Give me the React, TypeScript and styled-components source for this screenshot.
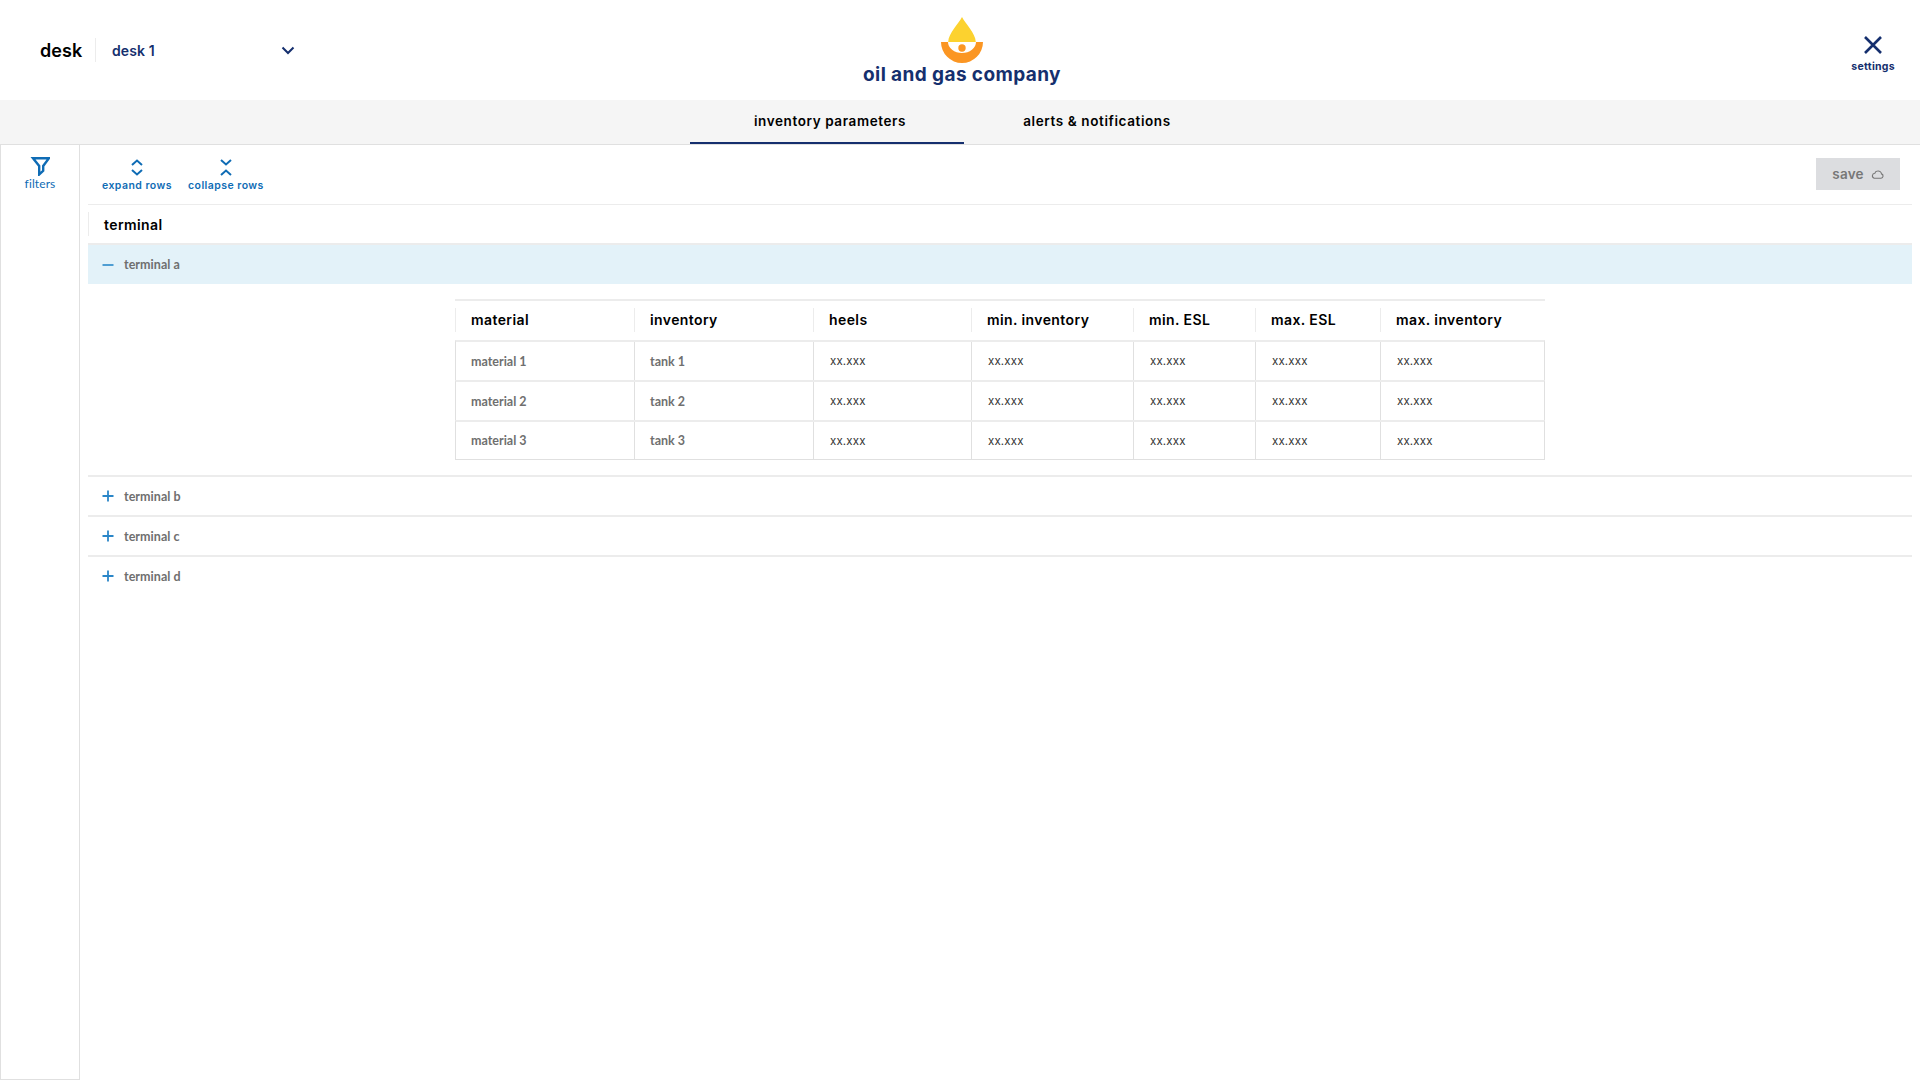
import React, { FC } from "react";
import styled, { createGlobalStyle } from "styled-components";

const NAVY = "#152f6e";
const BLUE = "#0f6cb5";
const LINE = "#e0e0e0";
const LIGHT_LINE = "#ececec";

const columns = [
  { name: "material", width: 179 },
  { name: "inventory", width: 179 },
  { name: "heels", width: 158 },
  { name: "min. inventory", width: 162 },
  { name: "min. ESL", width: 122 },
  { name: "max. ESL", width: 125 },
  { name: "max. inventory", width: 163 },
];

const rows = [
  ["material 1", "tank 1"],
  ["material 2", "tank 2"],
  ["material 3", "tank 3"],
];

const closedTerminals = ["terminal b", "terminal c", "terminal d"];

export default function App() {
  return (
    <>
      <GlobalStyle />
      <Page>
        <Header>
          <DeskPicker>
            <DeskLabel>desk</DeskLabel>
            <DeskSelect>
              <DeskValue>desk 1</DeskValue>
              <svg width="14" height="9" viewBox="0 0 14 9" fill="none">
                <path d="M1.5 1.5 7 7l5.5-5.5" stroke={NAVY} strokeWidth="2" />
              </svg>
            </DeskSelect>
          </DeskPicker>
          <Brand>
            <svg width="42" height="47" viewBox="0 0 42 47">
              <path d="M21 0C24 6 34.500 16 34.800 25H7.200C7.500 16 18 6 21 0z" fill="#fcd22f" />
              <path d="M0 25h7a14 11 0 0 0 28 0h7a21 21 0 0 1-42 0z" fill="#fb9623" />
              <circle cx="21" cy="31" r="3.700" fill="#fb9623" />
            </svg>
            <BrandName>oil and gas company</BrandName>
          </Brand>
          <SettingsButton>
            <svg width="20" height="20" viewBox="0 0 20 20" fill="none">
              <path d="M2 2l16 16M18 2 2 18" stroke={NAVY} strokeWidth="2.600" />
            </svg>
            <SettingsLabel>settings</SettingsLabel>
          </SettingsButton>
        </Header>

        <Tabs>
          <Tab $active $width={274}>inventory parameters</Tab>
          <Tab $width={266}>alerts &amp; notifications</Tab>
        </Tabs>

        <Body>
          <Sidebar>
            <svg width="20" height="19" viewBox="-2 0 20 19" fill="none">
              <path d="M1 1.200h16l-5.800 7.800v4.800l-4 3.700V9z" stroke={BLUE} strokeWidth="2.400" />
            </svg>
            <FilterLabel>filters</FilterLabel>
          </Sidebar>

          <Main>
            <Toolbar>
              <ToolGroup>
                <ToolButton>
                  <svg width="12" height="17" viewBox="0 0 12 17" fill="none">
                    <path d="M1 6l5-4.500L11 6M1 11l5 4.500L11 11" stroke={BLUE} strokeWidth="2" />
                  </svg>
                  <ToolLabel>expand rows</ToolLabel>
                </ToolButton>
                <ToolButton>
                  <svg width="12" height="17" viewBox="0 0 12 17" fill="none">
                    <path d="M1 1l5 4.500L11 1M1 16l5-4.500L11 16" stroke={BLUE} strokeWidth="2" />
                  </svg>
                  <ToolLabel>collapse rows</ToolLabel>
                </ToolButton>
              </ToolGroup>
              <SaveButton>
                save
                <svg width="13" height="9" viewBox="0 0 13 9" fill="none">
                  <path
                    d="M3.200 8.200h6.800a2.200 2.200 0 0 0 .5-4.300A3.300 3.300 0 0 0 6.600 1 3 3 0 0 0 3.800 3.300a2.500 2.500 0 0 0-.6 4.900z"
                    stroke="#777"
                    strokeWidth="1.100"
                  />
                </svg>
              </SaveButton>
            </Toolbar>

            <ListHead>
              <HeadLabel>terminal</HeadLabel>
            </ListHead>

            <TerminalRow $open>
              <ToggleIcon open />
              <TerminalName>terminal a</TerminalName>
            </TerminalRow>

            <DetailPanel>
              <Table>
                <TableHead>
                  {columns.map((col) => (
                    <HeadCell key={col.name} $width={col.width}>
                      <HeadLabel>{col.name}</HeadLabel>
                    </HeadCell>
                  ))}
                </TableHead>
                {rows.map(([material, tank]) => (
                  <TableRow key={material}>
                    <NameCell $width={columns[0].width}>{material}</NameCell>
                    <NameCell $width={columns[1].width}>{tank}</NameCell>
                    {columns.slice(2).map((col) => (
                      <ValueCell key={col.name} $width={col.width}>xx.xxx</ValueCell>
                    ))}
                  </TableRow>
                ))}
              </Table>
            </DetailPanel>

            {closedTerminals.map((name) => (
              <TerminalRow key={name}>
                <ToggleIcon />
                <TerminalName>{name}</TerminalName>
              </TerminalRow>
            ))}
          </Main>
        </Body>
      </Page>
    </>
  );
}

const ToggleIcon: FC<{ open?: boolean }> = ({ open }) => (
  <svg width="12" height="12" viewBox="0 0 12 12" fill="none">
    <path d={open ? "M.5 6h11" : "M.5 6h11M6 .5v11"} stroke={open ? "#3f95cf" : "#2a86c8"} strokeWidth="1.800" />
  </svg>
);

const GlobalStyle = createGlobalStyle`
  html, body {
    margin: 0;
    height: 100%;
    background: #fff;
    font-family: Lato, "Liberation Sans", sans-serif;
  }
  #root {
    height: 100%;
  }
`;

const Page = styled.div`
  display: flex;
  flex-direction: column;
  height: 1080px;
`;

const Header = styled.header`
  display: grid;
  grid-template-columns: 823px 198px 1fr;
  align-items: start;
  height: 100px;
  padding: 0 25px 0 40px;
`;

const DeskPicker = styled.div`
  display: flex;
  align-items: center;
  margin-top: 38px;
  height: 24px;
`;

const DeskLabel = styled.span`
  width: 55px;
  height: 24px;
  line-height: 25px;
  border-right: 1px solid ${LIGHT_LINE};
  font-family: Inter, sans-serif;
  font-size: 18px;
  font-weight: 600;
  letter-spacing: 0.1px;
  color: #000;
`;

const DeskSelect = styled.div`
  display: flex;
  align-items: center;
  justify-content: space-between;
  width: 183px;
  margin-left: 16px;
`;

const DeskValue = styled.span`
  font-family: Inter, sans-serif;
  font-size: 14px;
  font-weight: 600;
  letter-spacing: 0.1px;
  color: ${NAVY};
`;

const Brand = styled.div`
  display: flex;
  flex-direction: column;
  align-items: center;
  padding-top: 17px;
`;

const BrandName = styled.div`
  font-family: Inter, sans-serif;
  font-size: 19px;
  font-weight: 700;
  line-height: 22px;
  letter-spacing: 0.4px;
  white-space: nowrap;
  color: ${NAVY};
`;

const SettingsButton = styled.div`
  display: flex;
  flex-direction: column;
  align-items: center;
  justify-self: end;
  padding-top: 35px;
  gap: 5px;
`;

const SettingsLabel = styled.span`
  font-family: Inter, sans-serif;
  font-size: 10.500px;
  font-weight: 700;
  letter-spacing: 0.3px;
  color: ${NAVY};
`;

const Tabs = styled.nav`
  display: flex;
  justify-content: center;
  height: 44px;
  background: #f5f5f5;
  border-bottom: 1px solid ${LINE};
`;

const Tab = styled.div<{ $active?: boolean; $width: number }>`
  display: flex;
  align-items: center;
  justify-content: center;
  width: ${(p) => p.$width}px;
  height: 44px;
  box-sizing: border-box;
  padding-left: ${(p) => (p.$active ? 6 : 0)}px;
  border-bottom: 2px solid ${(p) => (p.$active ? NAVY : "transparent")};
  font-family: Inter, sans-serif;
  font-size: 13.500px;
  font-weight: 600;
  letter-spacing: 0.6px;
  color: #000;
`;

const Body = styled.div`
  display: flex;
  flex: 1;
  min-height: 0;
`;

const Sidebar = styled.aside`
  display: flex;
  flex-direction: column;
  align-items: center;
  width: 80px;
  box-sizing: border-box;
  padding-top: 12px;
  border: 1px solid ${LINE};
  border-top: 0;
`;

const FilterLabel = styled.span`
  font-size: 12px;
  letter-spacing: 0.1px;
  color: ${BLUE};
`;

const Main = styled.main`
  flex: 1;
  padding: 0 8px;
`;

const Toolbar = styled.div`
  display: flex;
  align-items: flex-start;
  justify-content: space-between;
  height: 59px;
  border-bottom: 1px solid ${LIGHT_LINE};
`;

const ToolGroup = styled.div`
  display: flex;
  gap: 16px;
  padding: 14px 0 0 14px;
`;

const ToolButton = styled.div`
  display: flex;
  flex-direction: column;
  align-items: center;
  gap: 3px;
`;

const ToolLabel = styled.span`
  font-family: Inter, sans-serif;
  font-size: 10.500px;
  font-weight: 600;
  letter-spacing: 0.45px;
  color: ${BLUE};
`;

const SaveButton = styled.button`
  display: flex;
  align-items: center;
  justify-content: center;
  gap: 7px;
  width: 84px;
  height: 32px;
  margin: 13px 12px 0 0;
  border: 0;
  background: #dcdde0;
  font-family: Inter, sans-serif;
  font-size: 13.500px;
  font-weight: 600;
  letter-spacing: 0.2px;
  color: #777;
`;

const ListHead = styled.div`
  display: flex;
  align-items: center;
  height: 38px;
  border-bottom: 2px solid ${LIGHT_LINE};
`;

const HeadLabel = styled.span`
  display: flex;
  align-items: center;
  height: 24px;
  padding-left: 15px;
  border-left: 1px solid ${LIGHT_LINE};
  font-family: Inter, sans-serif;
  font-size: 14px;
  font-weight: 600;
  letter-spacing: 0.4px;
  white-space: nowrap;
  color: #000;
`;

const TerminalRow = styled.div<{ $open?: boolean }>`
  display: flex;
  align-items: center;
  gap: 10px;
  height: ${(p) => (p.$open ? 39 : 38)}px;
  padding-left: 14px;
  background: ${(p) => (p.$open ? "#e3f2f9" : "#fff")};
  border-bottom: ${(p) => (p.$open ? "0" : `2px solid ${LIGHT_LINE}`)};

  &:last-child {
    border-bottom: 0;
  }
`;

const TerminalName = styled.span`
  font-size: 12.500px;
  font-weight: 700;
  letter-spacing: 0.05px;
  color: #6f6f6f;
`;

const DetailPanel = styled.div`
  height: 193px;
  box-sizing: border-box;
  padding: 15px 0 0 367px;
  border-bottom: 2px solid ${LIGHT_LINE};
`;

const Table = styled.div`
  width: 1090px;
  border-top: 2px solid ${LIGHT_LINE};
`;

const TableHead = styled.div`
  display: flex;
  align-items: center;
  height: 37px;
  padding-bottom: 2px;
`;

const HeadCell = styled.div<{ $width: number }>`
  width: ${(p) => p.$width}px;
`;

const TableRow = styled.div`
  display: flex;
  height: 40px;
  box-sizing: border-box;
  border-top: 2px solid ${LIGHT_LINE};
  border-left: 1px solid ${LINE};
  border-right: 1px solid ${LINE};

  &:last-child {
    border-bottom: 1px solid ${LINE};
  }
`;

const NameCell = styled.div<{ $width: number }>`
  display: flex;
  align-items: center;
  width: ${(p) => p.$width}px;
  box-sizing: border-box;
  padding-left: 15px;
  border-right: 1px solid ${LINE};
  font-size: 12.500px;
  font-weight: 700;
  color: #6f6f6f;
`;

const ValueCell = styled(NameCell)`
  padding-left: 16px;
  font-family: Inter, sans-serif;
  font-size: 11.500px;
  font-weight: 400;
  letter-spacing: 0.15px;
  color: #333;

  &:last-child {
    border-right: 0;
  }
`;
